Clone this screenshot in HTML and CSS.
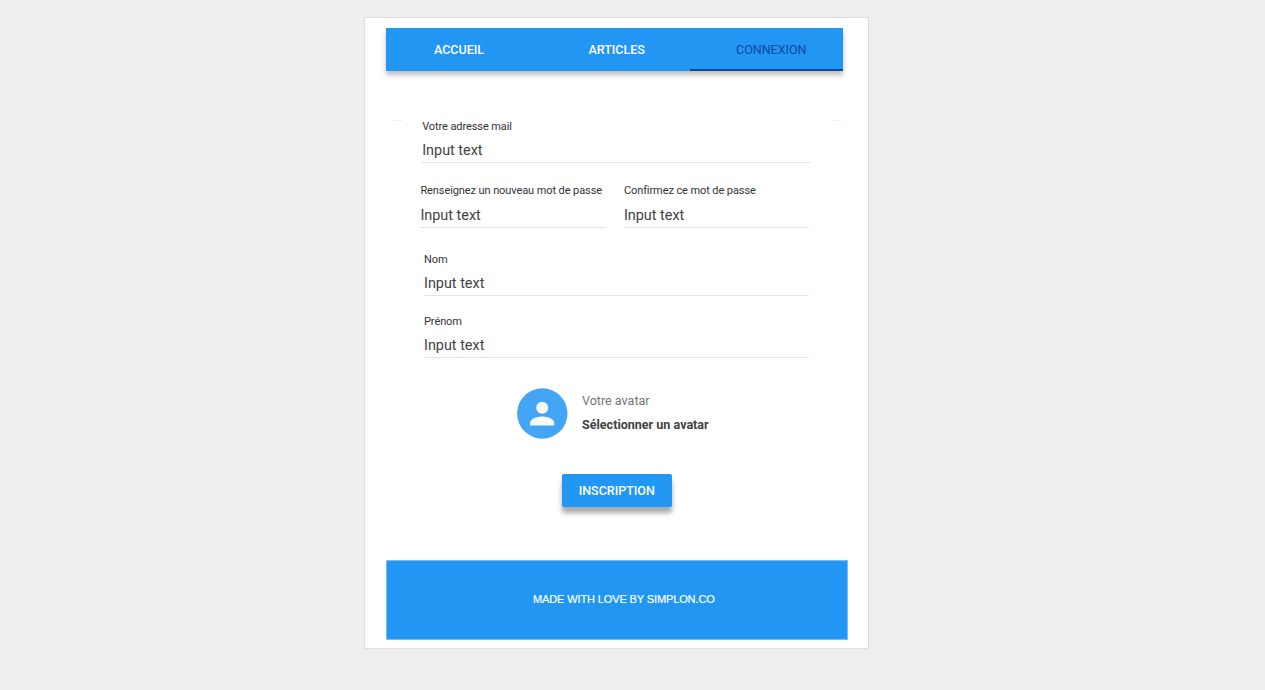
FILE: index.html
```html
<!DOCTYPE html>
<html lang="fr">
<head>
<meta charset="utf-8">
<title>Inscription</title>
<link rel="stylesheet" href="styles.css">
</head>
<body>
<main class="card">
  <nav class="tabs">
    <a class="tab tab-home"><span class="tab-text">ACCUEIL</span></a>
    <a class="tab tab-articles"><span class="tab-text">ARTICLES</span></a>
    <a class="tab tab-active"><span class="tab-text">CONNEXION</span></a>
  </nav>
  <form class="form">
    <div class="ticks"><span class="tick"></span><span class="tick"></span></div>
    <div class="field field-mail"><label class="label">Votre adresse mail</label><div class="input">Input text</div></div>
    <div class="row">
      <div class="field field-pass"><label class="label">Renseignez un nouveau mot de passe</label><div class="input">Input text</div></div>
      <div class="field field-pass"><label class="label">Confirmez ce mot de passe</label><div class="input">Input text</div></div>
    </div>
    <div class="field field-nom"><label class="label">Nom</label><div class="input">Input text</div></div>
    <div class="field field-prenom"><label class="label">Prénom</label><div class="input">Input text</div></div>
    <div class="avatar">
      <svg class="avatar-icon" viewBox="0 0 51 51">
        <circle cx="25.3" cy="25.5" r="25.2" fill="#42a5f5"/>
        <circle cx="25.2" cy="19.7" r="6" fill="#fafafa"/>
        <path d="M13.2 37.4v-3c0-4 8-6 12-6s12 2 12 6v3z" fill="#fafafa"/>
      </svg>
      <div class="avatar-info">
        <div class="avatar-title">Votre avatar</div>
        <div class="avatar-action">Sélectionner un avatar</div>
      </div>
    </div>
    <button class="submit" type="button"><span class="submit-text">INSCRIPTION</span></button>
  </form>
  <footer class="footer"><span class="footer-text">MADE WITH LOVE BY SIMPLON.CO</span></footer>
</main>
</body>
</html>
```
FILE: styles.css
```css
* { box-sizing: border-box; }
body { margin: 0; padding: 17px 0 0 364px; height: 690px; overflow: hidden; background: #eee; font-family: Roboto, "Liberation Sans", sans-serif; color: #424242; white-space: nowrap; }
.card { width: 505px; height: 632px; padding: 10px 20px 0 21px; background: #fff; border: 1px solid #dedede; display: flex; flex-direction: column; }
.tabs { width: 456.7px; height: 43px; display: grid; grid-template-columns: 152px 152px 1fr; background: #2196f3; box-shadow: 0 4px 5px rgba(0,0,0,.26); }
.tab { display: flex; align-items: center; color: #fff; font-size: 12.5px; font-weight: 500; }
.tab-home { padding-left: 48px; }
.tab-articles { padding-left: 50.4px; }
.tab-active { padding: 2px 0 0 46px; font-weight: 400; color: #0d47a1; border-bottom: 2px solid #0d47a1; }
.form { position: relative; height: 489px; padding-top: 48px; display: flex; flex-direction: column; align-items: flex-start; }
.ticks { position: absolute; top: 49px; left: 6px; width: 449px; display: flex; justify-content: space-between; }
.tick { width: 11px; border-top: 1px dotted #eaeaea; }
.field { border-bottom: 1px solid #e4e4e4; height: 44px; padding-top: 1px; }
.label { display: block; font-size: 11px; line-height: 14px; margin-bottom: 8px; color: #333; letter-spacing: -0.09px; }
.input { font-size: 14.4px; line-height: 18px; }
.row { display: flex; gap: 18px; margin: 20px 0 0 34.4px; }
.field-mail { width: 388.5px; margin-left: 36.2px; }
.field-pass { width: 185.5px; height: 45px; }
.field-pass .label { margin-bottom: 9px; }
.field-nom { width: 385px; margin: 24px 0 0 38px; }
.field-prenom { width: 385px; margin: 18px 0 0 38px; }
.avatar { display: flex; gap: 14px; margin: 30px 0 0 131px; }
.avatar-icon { width: 51px; height: 51px; }
.avatar-info { padding-top: 5px; font-size: 12.55px; line-height: 16px; }
.avatar-title { color: #757575; margin-bottom: 8px; }
.avatar-action { font-weight: 700; }
.submit { width: 110.5px; height: 33px; margin: 35px 0 0 175.5px; padding: 0; border: 0; border-radius: 2px; background: #2196f3; color: #fff; font: 500 12.5px Roboto, sans-serif; box-shadow: 0 6px 5px rgba(0,0,0,.34); }
.footer { width: 462px; height: 80px; display: flex; align-items: center; padding: 0 0 2px 146px; background: #2196f3; border: 1px solid #78bff8; color: #fff; font: 11px "Liberation Sans", sans-serif; letter-spacing: -0.12px; -webkit-text-stroke: 0.2px #fff; }
```
